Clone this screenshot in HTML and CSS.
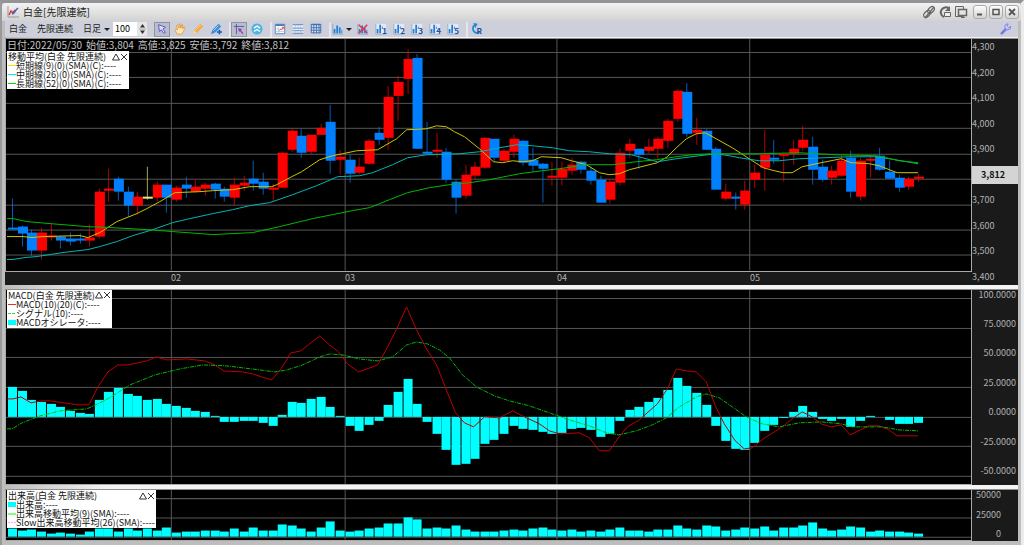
FILE: index.html
```html
<!DOCTYPE html>
<html lang="ja">
<head>
    <meta charset="UTF-8">
    <meta name="viewport" content="width=device-width, initial-scale=1.0">
    <title>白金[先限連続]</title>
    <link rel="stylesheet" href="styles.css">
</head>
<body>
    <!-- アイコン定義 -->
    <svg class="defs" width="0" height="0">
        <symbol id="i-bars" viewBox="0 0 14 14">
            <path d="M1 1v12h12" fill="none" stroke="#8aa4c4"/>
            <path d="M2 7h2v5H2zM5 3h2v9H5zM8 5h2v7H8zM11 8h1v4h-1z" fill="#1e7fe0"/>
        </symbol>
        <symbol id="i-bars-n" viewBox="0 0 14 14">
            <path d="M1 1h12v12H1z" fill="#e4e8f0"/>
            <path d="M1 1v12h12" fill="none" stroke="#9aa8bc"/>
            <path d="M2 7h2v5H2zM5 2h2v10H5zM8 4h1v3H8z" fill="#1e7fe0"/>
        </symbol>
        <symbol id="i-close" viewBox="0 0 8 8">
            <path d="M1 1l6 6M7 1L1 7" fill="none" stroke="#333"/>
        </symbol>
        <symbol id="i-up" viewBox="0 0 8 8">
            <path d="M4 1l3.500 6h-7z" fill="none" stroke="#333"/>
        </symbol>
    </svg>

    <div class="window">
        <header class="title-bar">
            <svg class="app-icon" viewBox="0 0 12 12"><path d="M1 0v11h11" fill="none" stroke="#999"/><path d="M2 9l2-4 2 2 2-3" fill="none" stroke="#d33" stroke-width="1.500"/><path d="M5 8l2-1 2-3 2-2" fill="none" stroke="#46b" stroke-width="1.500"/></svg>
            <h1>白金[先限連続]</h1>
            <div class="title-tools">
                <button aria-label="リンク"><svg viewBox="0 0 14 14"><g fill="none" stroke="#666" stroke-width="1.200"><ellipse cx="9" cy="5" rx="4" ry="2.500" transform="rotate(-45 9 5)"/><ellipse cx="5" cy="9" rx="4" ry="2.500" transform="rotate(-45 5 9)"/><path d="M3 13L12 2"/></g></svg></button>
                <button aria-label="更新"><svg viewBox="0 0 14 14"><path d="M11 3.500A5 5 0 1 0 6 12" fill="none" stroke="#666" stroke-width="2"/><path d="M12 1v5H7z" fill="#666"/><path d="M6.500 7.500h6v4h-6z" fill="#eee" stroke="#666"/></svg></button>
                <button aria-label="複製"><svg viewBox="0 0 14 14"><g fill="#e4e4e4" stroke="#666"><path d="M1.500 1.500h8v10h-8z"/><path d="M4.500 4.500h8v6h-8z" stroke-width="1.500"/></g><path d="M7 12.500h4" stroke="#666"/></svg></button>
            </div>
            <div class="window-buttons">
                <button aria-label="最小化"><svg viewBox="0 0 10 10"><path d="M2 7.500h5" stroke="#555" stroke-width="2"/></svg></button>
                <button aria-label="最大化"><svg viewBox="0 0 10 10"><path d="M2 2.500h6v5H2z" fill="none" stroke="#555" stroke-width="1.500"/></svg></button>
                <button aria-label="閉じる"><svg viewBox="0 0 10 10"><path d="M2 2l6 6M8 2L2 8" stroke="#555" stroke-width="1.800"/></svg></button>
            </div>
        </header>

        <nav class="toolbar">
            <div class="symbol-info">
                <span>白金</span>
                <span>先限連続</span>
                <label class="period"><select aria-label="足種"><option>日足</option></select></label>
            </div>
            <div class="count-box">
                <input type="text" value="100" aria-label="表示本数">
                <button aria-label="本数変更"><svg viewBox="0 0 9 12"><path d="M4.500 1L7 4.500H2zM4.500 11L7 7.500H2z" fill="#333"/><path d="M1 6h7" stroke="#aaa"/></svg></button>
            </div>
            <div class="tool-group">
                <button class="active" aria-label="選択"><svg viewBox="0 0 14 14"><path d="M3 2l8 3-3 2 3 4-2 1-3-4-2 2z" fill="#dcdcff" stroke="#5048c0"/></svg></button>
                <button aria-label="移動"><svg viewBox="0 0 14 14"><path d="M4 13L1 8l1-1 2 1-1-5 1-1 2 4V1h1l1 5 1-4h1v5l2-3 1 1-2 5-2 3z" fill="#ffe6b8" stroke="#e09a3c"/></svg></button>
                <button aria-label="鉛筆"><svg viewBox="0 0 14 14"><path d="M1 13l2-5 7-7 3 3-7 7z" fill="#f4a93c"/><path d="M4 9l7-7" stroke="#ffd98c"/><path d="M1 13l2-4 2 2z" fill="#fbe4c0"/></svg></button>
                <button aria-label="ペン"><svg viewBox="0 0 14 14"><path d="M1 13l2-5 7-7 3 3-7 7z" fill="#3a8ad8"/><path d="M4 9l6-6" stroke="#bfe0ff"/><path d="M11 8v5M8 10.500h6" stroke="#1560c8" stroke-width="2"/></svg></button>
            </div>
            <div class="tool-group">
                <button class="active" aria-label="十字線"><svg viewBox="0 0 14 14"><path d="M4 1v12M1 4h12" stroke="#4a50a0"/><path d="M6 6l5 1-2 1 3 4-1 1-3-4-1 2z" fill="#8c3cb0"/></svg></button>
                <button aria-label="上へ"><svg viewBox="0 0 14 14"><circle cx="7" cy="7" r="6.500" fill="#4fb4e0"/><path d="M3.500 6L7 3.500 10.500 6M3.500 10L7 7.500l3.500 2.500" fill="none" stroke="#fff" stroke-width="1.500"/></svg></button>
            </div>
            <div class="tool-group">
                <button aria-label="チャート設定"><svg viewBox="0 0 14 14"><path d="M1.500 1.500h11v11h-11z" fill="#fff" stroke="#4878b8"/><path d="M2 2.500h10" stroke="#4878b8" stroke-width="2"/><path d="M2 7h10M2 10h10M5 4v8" stroke="#b8c8e0"/><path d="M6 9l2-2 1 1 2-3M9 5h3v2" fill="none" stroke="#e04040"/></svg></button>
                <button aria-label="横罫線"><svg viewBox="0 0 14 14"><path d="M1 2h12v10H1z" fill="#eef3fa"/><path d="M1 2h12M1 6h12M1 9h12M1 12h12" stroke="#4878b8"/><path d="M4 2v10M7 2v10M10 2v10" stroke="#8caad0" stroke-dasharray="1 1"/></svg></button>
                <button aria-label="格子"><svg viewBox="0 0 14 14"><path d="M1.500 1.500h11v10h-11z" fill="#d8e4f4" stroke="#3c68b0"/><path d="M1 2h12M1 5.500h12M1 8.500h12M4.500 1v11M7.500 1v11M10.500 1v11" stroke="#3c68b0"/></svg></button>
            </div>
            <div class="tool-group">
                <button class="with-arrow" aria-label="指標"><svg viewBox="0 0 14 14"><use href="#i-bars"/></svg></button>
                <button aria-label="指標削除"><svg viewBox="0 0 14 14"><use href="#i-bars"/><path d="M2 2l10 10M12 2L2 12" stroke="#e03848" stroke-width="1.800"/></svg></button>
                <button class="preset"><svg viewBox="0 0 14 14"><use href="#i-bars-n"/></svg><span>1</span></button>
                <button class="preset"><svg viewBox="0 0 14 14"><use href="#i-bars-n"/></svg><span>2</span></button>
                <button class="preset"><svg viewBox="0 0 14 14"><use href="#i-bars-n"/></svg><span>3</span></button>
                <button class="preset"><svg viewBox="0 0 14 14"><use href="#i-bars-n"/></svg><span>4</span></button>
                <button class="preset"><svg viewBox="0 0 14 14"><use href="#i-bars-n"/></svg><span>5</span></button>
            </div>
            <div class="tool-group">
                <button class="preset"><svg viewBox="0 0 14 14"><path d="M6 2a5 5 0 1 0 5 9" fill="none" stroke="#1e8ad8" stroke-width="2"/><path d="M4 0l5 1-3 5z" fill="#1e8ad8"/></svg><span>R</span></button>
            </div>
            <button class="settings" aria-label="設定"><svg viewBox="0 0 14 14"><path d="M2 12l5-5" stroke="#7878e8" stroke-width="3" stroke-linecap="round"/><path d="M12.500 4a3.500 3.500 0 1 1-3-3L8.500 3.500l2 2z" fill="#c8c8ff" stroke="#7878e8"/></svg></button>
        </nav>

        <main class="charts">
            <!-- 価格 -->
            <section class="panel price">
                <div class="plot">
                    <svg id="price-chart" class="chart" viewBox="6 39 966 232" preserveAspectRatio="none"></svg>
                    <div class="overlay">
                        <p class="readout"><span>日付:2022/05/30</span><span>始値:3,804</span><span>高値:3,825</span><span>安値:3,792</span><span>終値:3,812</span></p>
                        <div class="legend">
                            <div class="legend-title"><span>移動平均(白金 先限連続)</span><button aria-label="畳む"><svg><use href="#i-up"/></svg></button><button aria-label="閉じる"><svg><use href="#i-close"/></svg></button></div>
                            <ul>
                                <li><i class="line yellow"></i>短期線(9)(0)(SMA)(C):----</li>
                                <li><i class="line cyan"></i>中期線(26)(0)(SMA)(C):----</li>
                                <li><i class="line green"></i>長期線(52)(0)(SMA)(C):----</li>
                            </ul>
                        </div>
                    </div>
                </div>
                <ol class="axis price-axis">
                    <li>4,300</li><li>4,200</li><li>4,100</li><li>4,000</li><li>3,900</li>
                    <li class="current">3,812</li>
                    <li>3,700</li><li>3,600</li><li>3,500</li><li>3,400</li>
                </ol>
                <div class="months"><span></span><span>02</span><span>03</span><span>04</span><span>05</span></div>
            </section>

            <!-- MACD -->
            <section class="panel macd">
                <div class="plot">
                    <svg id="macd-chart" class="chart" viewBox="6 290 966 195" preserveAspectRatio="none"></svg>
                    <div class="overlay">
                        <div class="legend narrow">
                            <div class="legend-title"><span>MACD(白金 先限連続)</span><button aria-label="畳む"><svg><use href="#i-up"/></svg></button><button aria-label="閉じる"><svg><use href="#i-close"/></svg></button></div>
                            <ul>
                                <li><i class="line red"></i>MACD(10)(20)(C):----</li>
                                <li><i class="line dashed"></i>シグナル(10):----</li>
                                <li><i class="box"></i>MACDオシレータ:----</li>
                            </ul>
                        </div>
                    </div>
                </div>
                <ol class="axis macd-axis">
                    <li>100.0000</li><li>75.0000</li><li>50.0000</li><li>25.0000</li><li>0.0000</li><li>-25.0000</li><li>-50.0000</li>
                </ol>
            </section>

            <!-- 出来高 -->
            <section class="panel volume">
                <div class="plot">
                    <svg id="volume-chart" class="chart" viewBox="6 491 966 49" preserveAspectRatio="none"></svg>
                    <div class="overlay">
                        <div class="legend">
                            <div class="legend-title"><span>出来高(白金 先限連続)</span><button aria-label="畳む"><svg><use href="#i-up"/></svg></button><button aria-label="閉じる"><svg><use href="#i-close"/></svg></button></div>
                            <ul>
                                <li><i class="box"></i>出来高:----</li>
                                <li><i class="line lime"></i>出来高移動平均(9)(SMA):----</li>
                                <li><i class="line pink"></i>Slow出来高移動平均(26)(SMA):----</li>
                            </ul>
                        </div>
                    </div>
                </div>
                <ol class="axis volume-axis">
                    <li>50000</li><li>25000</li><li>0</li>
                </ol>
            </section>
        </main>
    </div>

    <script>
        const NS = 'http://www.w3.org/2000/svg';
        const months = [171, 345, 557, 750];

        // ローソク足 [色, 高値, 実体上, 実体下, 安値]
        const candles = [
            ['b',199,228,229,229],['b',226,227,233,246],['b',230,233,250,255],['r',228,233,250,259],['r',224,236,237,240],
            ['b',236,237,240,248],['b',233,239,241,245],['b',234,239,240,243],['r',225,238,240,246],['r',189,192,236,238],
            ['r',169,189,190,201],['b',177,179,191,200],['b',187,192,205,216],['r',192,197,205,214],['y',167,197,198,199],
            ['r',182,185,197,201],['b',185,185,197,212],['r',186,188,199,201],['b',177,185,188,197],['r',180,187,191,192],
            ['r',183,185,188,195],['b',183,184,189,198],['b',187,189,196,201],['r',178,185,197,205],['r',176,183,185,190],
            ['b',161,179,183,190],['b',173,182,188,194],['r',184,188,189,201],['r',152,153,187,187],['r',128,131,149,151],
            ['b',129,136,152,157],['r',135,135,151,153],['r',124,128,134,134],['b',105,122,160,173],['r',150,157,159,174],
            ['b',155,160,173,182],['r',158,167,172,174],['r',139,141,163,164],['b',127,133,139,144],['r',86,97,137,149],
            ['r',76,82,95,120],['r',49,59,78,93],['b',54,58,148,148],['b',122,152,153,154],['r',133,150,151,157],
            ['b',148,152,179,182],['b',180,182,197,213],['r',165,175,195,198],['r',162,167,175,179],['r',137,138,167,168],
            ['b',139,139,157,161],['r',149,151,160,162],['r',135,139,151,157],['b',140,141,162,165],['b',148,160,165,171],
            ['b',163,164,168,202],['r',162,176,177,185],['r',162,169,177,185],['r',158,165,170,174],['b',161,162,169,173],
            ['b',167,171,180,184],['b',176,180,202,202],['r',179,182,199,203],['r',149,153,182,185],['r',139,144,150,157],
            ['b',149,149,154,168],['r',139,147,150,153],['r',137,139,148,158],['r',119,121,140,147],['r',89,91,118,121],
            ['b',83,92,133,136],['r',118,130,132,144],['b',129,131,149,149],['b',147,149,189,189],['r',184,192,198,200],
            ['b',193,197,198,209],['r',181,191,204,209],['r',165,173,179,187],['r',130,155,167,190],['b',140,158,159,163],
            ['r',154,154,155,181],['r',140,149,153,164],['r',126,140,147,150],['b',137,147,169,184],['b',160,167,179,181],
            ['r',166,171,177,184],['r',155,161,175,176],['b',151,158,191,197],['r',158,161,196,200],['r',156,159,160,177],
            ['b',148,156,169,170],['b',161,172,178,178],['b',175,178,187,191],['r',177,179,186,189],['r',174,177,178,181]
        ];

        const smaShort = '7,237 23,237 32,238 43,237 80,236 88,238 100,233 117,222 137,214 147,209 160,202 175,193 200,192 213,191 233,190 250,187 272,187 277,185 292,177 302,172 320,160 333,156 343,154 357,151 378,150 397,139 407,130 427,129 437,126 447,127 455,132 465,137 480,149 494,162 503,163 513,161 523,162 533,161 542,157 562,158 572,161 587,165 600,173 610,175 620,174 630,170 658,163 668,157 677,148 687,139 697,134 706,133 717,139 733,148 750,159 764,168 775,171 784,173 793,173 803,167 822,163 842,159 852,163 870,164 880,166 898,173 919,173';
        const smaMid = '7,260 13,260 25,258 37,257 63,253 88,250 100,247 117,242 133,236 150,231 173,223 190,219 213,214 233,210 250,206 270,203 293,195 317,186 338,177 360,176 373,173 393,165 408,158 427,155 460,154 480,152 500,148 517,145 533,146 553,148 570,151 590,152 610,154 632,155 643,158 658,162 677,159 700,156 717,154 730,156 740,158 760,161 780,161 800,159 850,157 877,157 890,159 902,161 919,164';
        const smaLong = '7,219 13,219 27,222 50,224 87,227 110,228 147,230 173,232 213,235 233,234 253,233 280,227 313,219 333,215 353,211 370,208 390,200 408,193 430,188 450,185 470,183 490,180 510,176 520,174 543,171 560,169 587,165 613,165 637,162 657,160 677,157 693,155 713,154 760,154 800,153 837,155 877,156 887,158 900,161 919,163';

        const oscillator = [
            387,391,400,402,404,407,411,413,414,400,392,388,394,396,400,399,404,406,408,411,412,416,422,422,421,
            421,423,426,415,402,403,399,397,407,416,426,431,425,421,405,392,379,404,422,434,450,465,464,459,444,
            440,434,426,429,430,432,434,433,429,428,430,437,434,421,410,407,402,398,390,378,386,393,405,426,441,
            449,450,443,431,425,418,412,406,412,419,421,419,427,421,416,417,420,424,424,423
        ];
        const macd = '7,399 13,399 21,397 31,403 40,401 50,401 78,405 89,405 98,387 108,372 118,365 128,365 147,361 156,357 167,360 187,359 205,361 215,365 224,371 243,372 253,374 262,377 272,380 282,368 291,353 301,351 320,336 330,345 339,352 348,364 359,372 370,368 378,365 388,347 397,329 407,307 417,330 427,349 437,365 446,388 456,413 465,423 474,427 485,417 500,418 513,411 525,417 540,424 550,431 560,434 580,433 590,438 600,451 610,451 619,438 628,427 640,420 658,404 668,389 677,369 687,371 697,372 707,382 717,408 725,424 736,441 745,449 753,448 764,439 783,427 793,419 803,412 813,417 822,424 832,427 842,425 851,435 870,426 880,426 890,430 898,436 919,436';
        const signal = '7,429 12,429 22,423 40,416 60,411 87,409 100,403 113,396 130,385 155,375 180,369 203,365 227,366 260,370 275,372 287,370 303,365 320,357 330,354 343,355 360,359 378,361 393,357 407,345 417,342 428,344 440,350 450,358 463,375 477,387 495,396 510,401 530,406 550,413 570,420 590,426 607,433 619,435 637,431 653,425 667,418 680,407 697,397 707,394 720,398 733,407 747,417 763,424 780,427 800,423 822,422 842,424 853,427 883,427 900,430 919,431';

        const volume = [
            529,531,530,532,534,533,534,535,532,529,529,532,529,531,529,531,528,533,532,532,531,531,532,529,532,
            528,531,531,525,526,529,532,528,522,531,532,531,529,528,524,524,518,520,529,528,529,526,530,532,532,
            532,531,530,531,529,528,530,531,530,532,531,532,530,528,531,531,532,530,530,526,529,530,526,527,531,
            530,528,529,527,531,528,528,526,523,529,531,530,527,528,532,531,532,532,533,534
        ];

        function add(svg, tag, attrs) {
            const el = document.createElementNS(NS, tag);
            for (const key in attrs) el.setAttribute(key, attrs[key]);
            svg.appendChild(el);
        }

        // i本目の中心X
        function barX(i) {
            return Math.round(12 + i * 907 / 94);
        }

        function drawGrid(svg, rows, top, bottom) {
            rows.forEach(y => add(svg, 'path', {class: 'grid', d: `M6 ${y + 0.5}H972`}));
            months.forEach(x => add(svg, 'path', {class: 'grid', d: `M${x + 0.5} ${top}V${bottom}`}));
        }

        function drawBars(svg, values, base) {
            values.forEach((y, i) => {
                add(svg, 'rect', {class: 'bar', x: barX(i) - 4, y: Math.min(y, base), width: 9, height: Math.abs(base - y)});
            });
        }

        function drawLine(svg, points, cls) {
            add(svg, 'polyline', {class: 'series ' + cls, points: points});
        }

        const price = document.getElementById('price-chart');
        drawGrid(price, [52, 77, 103, 128, 154, 179, 205, 230, 255], 39, 271);
        candles.forEach(([color, high, top, bottom, low], i) => {
            const x = barX(i);
            add(price, 'rect', {class: 'wick ' + color, x: x, y: high, width: 1, height: low - high + 1});
            add(price, 'rect', {class: 'body ' + color, x: x - 4, y: top, width: 10, height: bottom - top + 1});
        });
        drawLine(price, smaShort, 'short');
        drawLine(price, smaMid, 'mid');
        drawLine(price, smaLong, 'long');

        const macdChart = document.getElementById('macd-chart');
        drawGrid(macdChart, [298, 328, 357, 387, 417, 446, 476], 290, 485);
        drawBars(macdChart, oscillator, 417);
        drawLine(macdChart, macd, 'macd-line');
        drawLine(macdChart, signal, 'signal-line');

        const volumeChart = document.getElementById('volume-chart');
        drawGrid(volumeChart, [499, 518, 537], 491, 540);
        drawBars(volumeChart, volume, 537);
    </script>
</body>
</html>
```
FILE: styles.css
```css
* {
    margin: 0;
    padding: 0;
    box-sizing: border-box;
}

body {
    background: #b9b9b9;
    font-family: "Noto Sans CJK JP", sans-serif;
    font-size: 9px;
    line-height: 10px;
    color: #222;
}

ul, ol {
    list-style: none;
}

button {
    border: none;
    background: none;
    font: inherit;
    display: flex;
    align-items: center;
    justify-content: center;
}

.defs {
    position: absolute;
}

.window {
    display: flex;
    flex-direction: column;
    height: 100vh;
    min-height: 400px;
    border-top: 3px solid #939398;
    border-left: 2px solid #999;
    border-right: 3px solid #ececec;
    background: #bdbdbd;
    padding: 0 3px 4px;
}

/* タイトルバー */
.title-bar {
    display: flex;
    align-items: center;
    height: 18px;
    margin: 0 -3px;
    padding: 0 2px 0 5px;
    background: linear-gradient(#f2f2f2, #d2d2d2);
    border-radius: 4px 4px 0 0;
}

.app-icon {
    width: 12px;
    height: 12px;
    margin-right: 4px;
}

h1 {
    flex: 1;
    font-size: 10px;
    font-weight: 400;
    line-height: 14px;
}

.title-tools {
    display: flex;
    gap: 2px;
    margin-right: 5px;
}

.title-tools svg {
    width: 14px;
    height: 14px;
}

.window-buttons {
    display: flex;
    gap: 2px;
}

.window-buttons button {
    width: 14px;
    height: 14px;
    border: 1px solid #aaa;
    border-radius: 3px;
    background: linear-gradient(#fdfdfd, #d4d4d4);
}

.window-buttons svg {
    width: 10px;
    height: 10px;
}

/* ツールバー */
.toolbar {
    display: flex;
    align-items: center;
    gap: 7px;
    height: 16px;
    padding: 0 6px 0 4px;
    background: #cdd0da;
}

.symbol-info {
    display: flex;
    align-items: center;
    gap: 10px;
}

.period {
    position: relative;
    display: flex;
}

select {
    appearance: none;
    width: 30px;
    border: none;
    background: none;
    font: inherit;
    color: inherit;
}

.period::after,
.with-arrow::after {
    content: "";
    border: 3px solid transparent;
    border-top-color: #222;
    border-bottom: none;
}

.period::after {
    position: absolute;
    right: 3px;
    top: 4px;
}

.count-box {
    display: flex;
    width: 34px;
    height: 14px;
    margin-left: -7px;
    background: #fff;
}

.count-box input {
    width: 24px;
    border: none;
    padding-left: 2px;
    background: none;
    font: inherit;
}

.count-box button {
    width: 10px;
    background: #e6e6e6;
}

.count-box svg {
    width: 9px;
    height: 12px;
}

.tool-group {
    display: flex;
    gap: 2px;
}

.tool-group + .tool-group {
    box-shadow: -2px 0 #e4e6ec;
}

.tool-group button {
    width: 16px;
    height: 15px;
}

.tool-group svg {
    flex: none;
    width: 12px;
    height: 12px;
}

.tool-group .active {
    border: 1px solid #9094a0;
    background: #b9bdcc;
}

.tool-group .with-arrow {
    width: 22px;
    gap: 2px;
}

.preset {
    position: relative;
}

.preset span {
    position: absolute;
    right: 2px;
    bottom: 1px;
    font-size: 8px;
    font-weight: 700;
    color: #1a50a8;
}

.settings {
    margin-left: auto;
}

.settings svg {
    width: 12px;
    height: 12px;
}

/* チャート */
.charts {
    flex: 1;
    display: flex;
    flex-direction: column;
    gap: 4px;
    min-height: 0;
    padding-top: 1px;
    background: linear-gradient(90deg, #bdbdbd, #f4f4f4 10%);
}

.panel {
    display: grid;
    grid-template-columns: minmax(0, 1fr) 46px;
    grid-template-rows: minmax(0, 1fr);
    min-height: 0;
    border-top: 1px solid #8f8f8f;
    background: #1a1a1a;
}

.price {
    flex: 247;
    grid-template-rows: minmax(0, 1fr) 13px;
}

.macd {
    flex: 197;
}

.volume {
    flex: 51;
}

.plot {
    display: grid;
    min-height: 0;
    border-left: 1px solid #aaa;
    border-right: 1px solid #aaa;
    border-bottom: 1px solid #aaa;
    background: #000;
}

.chart,
.overlay {
    grid-area: 1 / 1;
    min-height: 0;
}

.chart {
    width: 100%;
    height: 100%;
}

.overlay {
    z-index: 1;
    padding: 0 1px;
}

.grid {
    stroke: #565656;
    fill: none;
}

.bar {
    fill: #00ffff;
}

.r {
    fill: #ff0000;
}

.b {
    fill: #0080ff;
}

.y {
    fill: #e8e880;
}

.wick {
    opacity: 0.7;
}

.series {
    fill: none;
    stroke-width: 1;
    vector-effect: non-scaling-stroke;
}

.short {
    stroke: #ccc400;
}

.mid {
    stroke: #00b4b4;
}

.long {
    stroke: #00b800;
}

.macd-line {
    stroke: #bc0000;
}

.signal-line {
    stroke: #00bc00;
    stroke-dasharray: 4 1 1 1;
}

.readout {
    display: flex;
    gap: 4px;
    font-size: 10px;
    line-height: 12px;
    color: #c4c4c4;
    white-space: nowrap;
}

/* 凡例 */
.legend {
    width: fit-content;
    min-width: 122px;
    padding: 1px;
    background: #fff;
    color: #111;
    line-height: 9px;
    white-space: nowrap;
}

.legend.narrow {
    min-width: 98px;
}

.legend-title {
    display: flex;
    align-items: center;
}

.legend-title span {
    flex: 1;
}

.legend-title svg {
    width: 8px;
    height: 8px;
}

.legend li {
    display: flex;
    align-items: center;
}

.legend i {
    width: 8px;
    height: 1px;
}

.legend .yellow {
    background: #f0e800;
}

.legend .cyan {
    background: #00e8f0;
}

.legend .green {
    background: #00d800;
}

.legend .red {
    background: #e83030;
}

.legend .dashed {
    background: repeating-linear-gradient(90deg, #30e030 0 3px, #fff 3px 4px);
}

.legend .lime {
    height: 2px;
    background: #80ff80;
}

.legend .pink {
    background: repeating-linear-gradient(90deg, #ffa0ff 0 2px, #fff 2px 3px);
}

.legend .box {
    height: 5px;
    background: #00ffff;
}

/* 目盛り */
.axis {
    display: flex;
    flex-direction: column;
    justify-content: space-between;
    color: #b0b0b0;
}

.price-axis {
    grid-row: 1 / 3;
    grid-column: 2;
    padding: 3px 0;
}

.current {
    margin: -4px 0;
    padding: 4px 9px;
    background: #d4d4d4;
    color: #111;
    font-weight: 700;
}

.macd-axis {
    padding: 0 2px 9px 0;
    text-align: right;
}

.volume-axis {
    padding: 0 17px 2px 0;
    text-align: right;
}

.months {
    grid-row: 2;
    grid-column: 1;
    display: grid;
    grid-template-columns: 166fr 174fr 212fr 193fr 222fr;
    align-items: center;
    color: #b0b0b0;
}
```
